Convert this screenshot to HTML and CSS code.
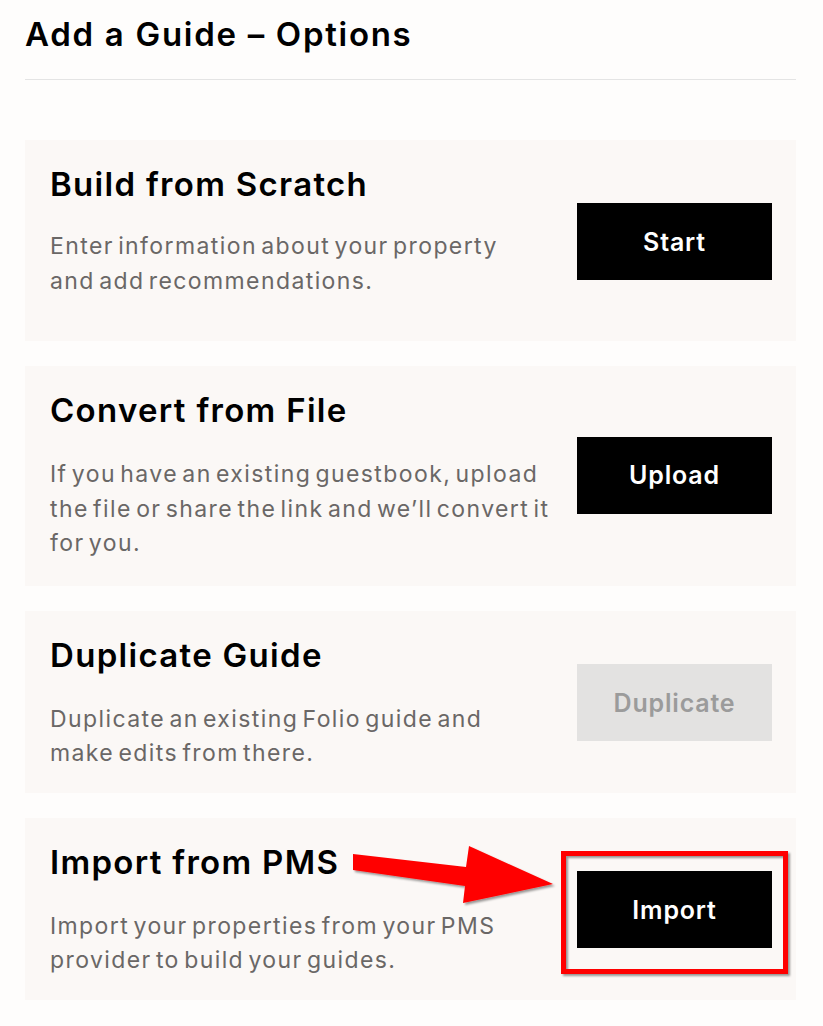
FILE: index.html
```html
<!DOCTYPE html>
<html lang="en">

<head>
    <meta charset="UTF-8">
    <meta name="viewport" content="width=device-width, initial-scale=1.0">
    <title>Add a Guide - Options</title>
    <link rel="stylesheet" href="styles.css">
</head>

<body>
    <div class="page">
        <div class="header">
            <h1>Add a Guide – Options</h1>
        </div>

        <div class="options">

            <div class="option option_first">
                <div class="option_text">
                    <h2>Build from Scratch</h2>
                    <p>Enter information about your property<br>and add recommendations.</p>
                </div>
                <button class="btn">Start</button>
            </div>

            <div class="option option_file">
                <div class="option_text">
                    <h2>Convert from File</h2>
                    <p>If you have an existing guestbook, upload<br>the file or share the link and we’ll convert it<br>for you.</p>
                </div>
                <button class="btn">Upload</button>
            </div>

            <div class="option">
                <div class="option_text">
                    <h2>Duplicate Guide</h2>
                    <p>Duplicate an existing Folio guide and<br>make edits from there.</p>
                </div>
                <button class="btn btn_disabled" disabled>Duplicate</button>
            </div>

            <div class="option option_pms">
                <div class="option_text">
                    <h2>Import from PMS</h2>
                    <p>Import your properties from your PMS<br>provider to build your guides.</p>
                </div>
                <button class="btn">Import</button>

                <!-- annotation drawn over the card -->
                <svg class="callout" width="823" height="200" viewBox="0 0 823 200">
                    <defs>
                        <filter id="shadow" x="-10%" y="-10%" width="130%" height="130%">
                            <feDropShadow dx="2" dy="2" stdDeviation="1.2" flood-color="#000" flood-opacity="0.4" />
                        </filter>
                    </defs>
                    <polygon points="353,36 466,49 469,28 553,66 463,85 465,68 353,52" fill="#ff0000" filter="url(#shadow)" />
                    <rect x="563.5" y="35.5" width="222" height="118" fill="none" stroke="#ff0000" stroke-width="5" filter="url(#shadow)" />
                </svg>
            </div>

        </div>
    </div>
</body>

</html>
```

FILE: styles.css
```css
body {
    font-family: Inter, "Noto Sans", sans-serif;
    margin: 0;
    background-color: #fefdfc;
    color: #000;
}

.page {
    padding: 0 27px 0 25px;
}

.header {
    padding-top: 14px;
    padding-bottom: 25px;
    border-bottom: 1px solid #e4e4e4;
}

h1 {
    margin: 0;
    font-size: 33px;
    font-weight: 600;
    letter-spacing: 1.7px;
}

.options {
    margin-top: 60px;
    display: flex;
    flex-direction: column;
    gap: 25px;
}

.option {
    position: relative;
    display: flex;
    align-items: center;
    gap: 20px;
    padding: 24px 24px 22px 25px;
    background-color: #fbf8f6;
}

.option_text {
    flex: 1;
}

h2 {
    margin: 0;
    font-size: 33px;
    font-weight: 600;
    letter-spacing: 1.3px;
}

.option_text p {
    margin: 27px 0 0 0;
    font-size: 23px;
    line-height: 1.5;
    letter-spacing: 1.4px;
    word-spacing: -3.5px;
    color: #6a6766;
}

.option_first .option_text p {
    margin: 25px 0 21px 0;
}

.option_file {
    padding-bottom: 25px;
}

.btn {
    width: 195px;
    height: 77px;
    flex-shrink: 0;
    padding: 0;
    background-color: #000;
    color: #fff;
    border: none;
    border-radius: 0;
    font-family: inherit;
    font-size: 25px;
    font-weight: 600;
    letter-spacing: 0.8px;
    cursor: pointer;
}

.btn_disabled {
    background-color: #e3e2e1;
    color: #9b9b9b;
    cursor: default;
}

.callout {
    position: absolute;
    left: -25px;
    top: 0;
    pointer-events: none;
}
```
